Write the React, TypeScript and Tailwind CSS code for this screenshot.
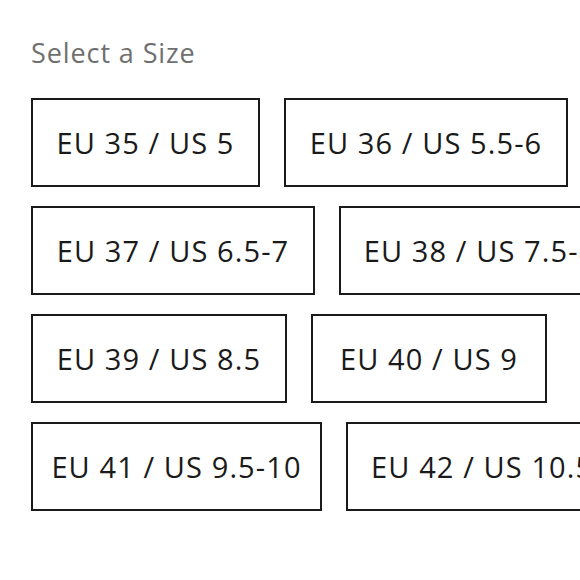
import { useState } from 'react';

const rows: { label: string; width: number }[][] = [
  [
    { label: 'EU 35 / US 5', width: 229 },
    { label: 'EU 36 / US 5.5-6', width: 284 },
  ],
  [
    { label: 'EU 37 / US 6.5-7', width: 284 },
    { label: 'EU 38 / US 7.5-8', width: 282 },
  ],
  [
    { label: 'EU 39 / US 8.5', width: 256 },
    { label: 'EU 40 / US 9', width: 236 },
  ],
  [
    { label: 'EU 41 / US 9.5-10', width: 291 },
    { label: 'EU 42 / US 10.5-11', width: 318 },
  ],
];

export default function App() {
  const [selected, setSelected] = useState<string | null>(null);

  return (
    <div
      className="w-[580px] h-[580px] overflow-hidden bg-white"
      style={{ fontFamily: '"Open Sans", "Noto Sans", sans-serif' }}
    >
      <div className="pl-[31px] pt-[36px]">
        <h2 className="text-[27px] leading-[34px] tracking-[0.9px] text-[#6f6f6f] font-normal">
          Select a Size
        </h2>

        {/* Size options */}
        <div className="mt-[28px] flex flex-col gap-[19px]">
          {rows.map((row, i) => (
            <div key={i} className="flex gap-[24px] whitespace-nowrap">
              {row.map((size) => (
                <button
                  key={size.label}
                  onClick={() => setSelected(size.label)}
                  className={`h-[89px] shrink-0 flex items-center justify-center border-2 border-[#1a1a1a] text-[29px] tracking-[1.1px] text-[#1a1a1a] ${
                    selected === size.label ? 'bg-[#f3f3f3]' : 'bg-white'
                  }`}
                  style={{ width: size.width }}
                >
                  {size.label}
                </button>
              ))}
            </div>
          ))}
        </div>
      </div>
    </div>
  );
}
